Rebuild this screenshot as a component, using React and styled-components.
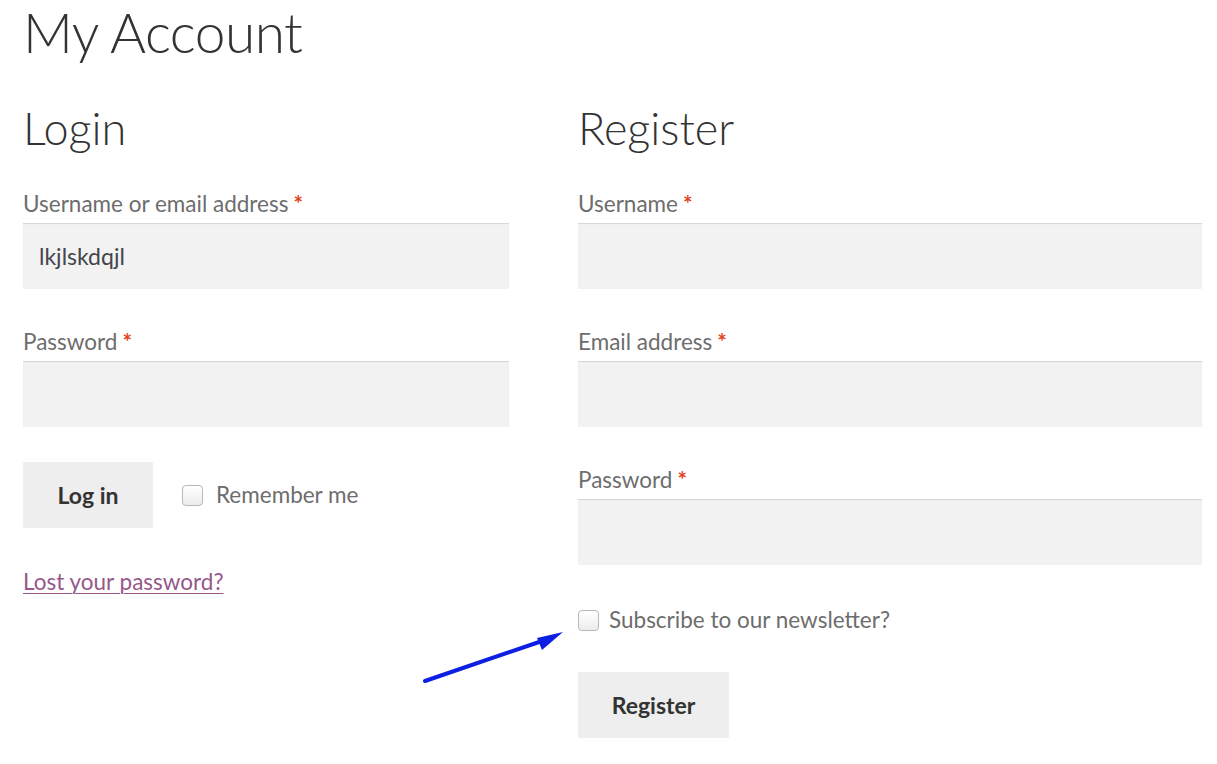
import React from "react";
import styled, { createGlobalStyle } from "styled-components";

const Global = createGlobalStyle`
  html, body { margin: 0; padding: 0; background: #ffffff; }
  body { font-family: Lato, "Liberation Sans", sans-serif; -webkit-font-smoothing: antialiased; }
  * { box-sizing: border-box; }
`;

const Page = styled.div`
  position: relative;
  width: 1217px;
  height: 764px;
  overflow: hidden;
  padding: 0 0 0 23px;
`;

const Title = styled.h1`
  margin: 0;
  padding-top: 6px;
  font-size: 55px;
  line-height: 53px;
  font-weight: 300;
  color: #333333;
  letter-spacing: -0.5px;
`;

const Columns = styled.div`
  display: grid;
  grid-template-columns: 486px 624px;
  column-gap: 69px;
  margin-top: 47px;
`;

const Column = styled.section`
  display: flex;
  flex-direction: column;
`;

const SubTitle = styled.h2`
  margin: 0;
  font-size: 45px;
  line-height: 44px;
  font-weight: 300;
  color: #333333;
`;

const Field = styled.div`
  display: flex;
  flex-direction: column;
  margin-top: ${(p) => p.$top}px;
`;

const Label = styled.label`
  display: block;
  font-size: 22.5px;
  line-height: 28px;
  color: #6d6d6d;
  margin-bottom: 5px;
`;

const Req = styled.span`
  color: #e2401c;
  font-weight: 700;
  margin-left: 5px;
`;

const Input = styled.input`
  display: block;
  width: 100%;
  height: 66px;
  border: 0;
  outline: none;
  background: #f2f2f2;
  box-shadow: inset 0 1px 1px rgba(0, 0, 0, 0.125);
  padding: 0 16px;
  font-family: inherit;
  font-size: 23px;
  color: #43454b;
`;

const ActionRow = styled.div`
  display: flex;
  align-items: center;
  gap: 29px;
  margin-top: ${(p) => p.$top}px;
`;

const Button = styled.button`
  height: 66px;
  width: ${(p) => p.$w}px;
  margin-top: ${(p) => p.$top || 0}px;
  border: 0;
  background: #eeeeee;
  color: #333333;
  font-family: inherit;
  font-weight: 700;
  font-size: 23px;
  cursor: pointer;
  padding: 0;
`;

const CheckLabel = styled.label`
  display: flex;
  align-items: center;
  gap: ${(p) => p.$gap}px;
  font-size: 22.5px;
  line-height: 28px;
  color: #6d6d6d;
  margin-top: ${(p) => p.$top || 0}px;
`;

const Check = styled.input.attrs({ type: "checkbox" })`
  appearance: none;
  -webkit-appearance: none;
  margin: 0;
  width: 21px;
  height: 21px;
  border: 1px solid #b9b9b9;
  border-radius: 4px;
  background: linear-gradient(#ffffff, #ececec);
  box-shadow: 0 0 1px rgba(0,0,0,0.1);
`;

const Lost = styled.a`
  display: inline-block;
  margin-top: ${(p) => p.$top}px;
  font-size: 22.5px;
  line-height: 28px;
  color: #96588a;
  text-decoration: underline;
  text-underline-offset: 3px;
  text-decoration-thickness: 1px;
  align-self: flex-start;
`;

const Arrow = styled.svg`
  position: absolute;
  left: 415px;
  top: 622px;
  width: 160px;
  height: 70px;
  pointer-events: none;
`;

export default function App() {
  return (
    <>
      <Global />
      <Page>
        <Title>My Account</Title>
        <Columns>
          <Column>
            <SubTitle>Login</SubTitle>
            <Field $top={40}>
              <Label>
                Username or email address<Req>*</Req>
              </Label>
              <Input defaultValue="lkjlskdqjl" />
            </Field>
            <Field $top={39}>
              <Label>
                Password<Req>*</Req>
              </Label>
              <Input type="password" />
            </Field>
            <ActionRow $top={35}>
              <Button $w={130}>Log in</Button>
              <CheckLabel $gap={13}>
                <Check />
                Remember me
              </CheckLabel>
            </ActionRow>
            <Lost href="#" $top={40}>
              Lost your password?
            </Lost>
          </Column>
          <Column>
            <SubTitle>Register</SubTitle>
            <Field $top={40}>
              <Label>
                Username<Req>*</Req>
              </Label>
              <Input />
            </Field>
            <Field $top={39}>
              <Label>
                Email address<Req>*</Req>
              </Label>
              <Input />
            </Field>
            <Field $top={39}>
              <Label>
                Password<Req>*</Req>
              </Label>
              <Input type="password" />
            </Field>
            <CheckLabel $top={41} $gap={10}>
              <Check />
              Subscribe to our newsletter?
            </CheckLabel>
            <Button $w={151} $top={38}>
              Register
            </Button>
          </Column>
        </Columns>
        <Arrow viewBox="0 0 160 70">
          <line x1="10" y1="59" x2="130" y2="18" stroke="#0d1fe3" strokeWidth="4" strokeLinecap="round" />
          <polygon points="148,10 122,16 127,28" fill="#0d1fe3" />
        </Arrow>
      </Page>
    </>
  );
}
